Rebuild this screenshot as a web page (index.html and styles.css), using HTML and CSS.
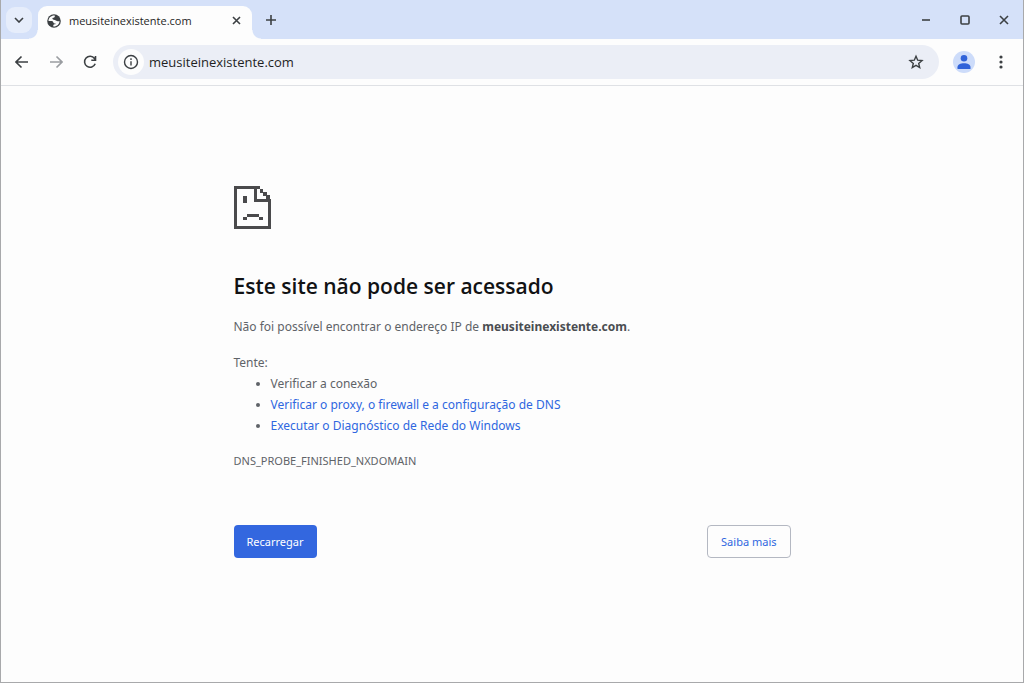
FILE: index.html
```html
<!DOCTYPE html>
<html lang="pt-BR">
<head>
  <meta charset="UTF-8">
  <meta name="viewport" content="width=device-width, initial-scale=1">
  <title>meusiteinexistente.com</title>
  <link rel="stylesheet" href="styles.css">
</head>
<body>
  <div class="window">

    <!-- Tab strip -->
    <header class="tab-strip">
      <button class="tab-search" type="button" aria-label="Pesquisar guias">
        <svg width="10" height="6" viewBox="0 0 10 6"><path d="M1 1l4 4 4-4"/></svg>
      </button>
      <div class="tab">
        <svg class="globe" width="14" height="14" viewBox="0 0 14 14">
          <circle cx="7" cy="7" r="6.8"/>
          <path d="M7.800 1.600C4.300 1.300 1.600 3.800 1.500 6.900h2.700c1.500 0 2 .7 2.200 1.500.2.900.9 1 1.800 1 .6 0 .5.600 0 .900-.6.300-1.900.1-1.900 1v1.100c3.400.300 6.200-2.200 6.200-5.500-.6.5-1.600.6-2.500.2-.9-.4-1.300-1.200-2.300-1.200-1.300 0-2.300-.4-2.300-1.300 0-1 1-1 1.800-1.200.7-.2.600-.9.600-1.800z"/>
        </svg>
        <span class="tab-title">meusiteinexistente.com</span>
        <button class="tab-close" type="button" aria-label="Fechar guia">
          <svg width="9" height="9" viewBox="0 0 9 9"><path d="M1 1l7 7M8 1l-7 7"/></svg>
        </button>
      </div>
      <button class="new-tab" type="button" aria-label="Nova guia">
        <svg width="12" height="12" viewBox="0 0 12 12"><path d="M6 1v10M1 6h10"/></svg>
      </button>
      <div class="window-controls">
        <button type="button" aria-label="Minimizar">
          <svg width="10" height="10" viewBox="0 0 10 10"><path d="M1 5h8"/></svg>
        </button>
        <button type="button" aria-label="Maximizar">
          <svg width="10" height="10" viewBox="0 0 10 10"><rect x="1" y="1" width="8" height="8" rx="1"/></svg>
        </button>
        <button type="button" aria-label="Fechar">
          <svg width="10" height="10" viewBox="0 0 10 10"><path d="M1 1l8 8M9 1L1 9"/></svg>
        </button>
      </div>
    </header>

    <!-- Toolbar -->
    <div class="toolbar">
      <nav class="nav-buttons">
        <button type="button" aria-label="Voltar">
          <svg width="14" height="14" viewBox="0 0 14 14"><path d="M13 7H1.500M6.500 1.500L1 7l5.500 5.500"/></svg>
        </button>
        <button class="inactive" type="button" aria-label="Avançar">
          <svg width="14" height="14" viewBox="0 0 14 14"><path d="M1 7h11.500M7.500 1.500L13 7l-5.500 5.500"/></svg>
        </button>
        <button type="button" aria-label="Atualizar">
          <svg width="14" height="14" viewBox="0 0 14 14"><path d="M12.200 8.800A5.500 5.500 0 1 1 11.500 3.500L12.500 4.800M12.500 1v4.200H8.300"/></svg>
        </button>
      </nav>
      <div class="address-bar">
        <button class="site-info" type="button" aria-label="Informações do site">
          <svg width="16" height="16" viewBox="0 0 16 16"><circle cx="8" cy="8" r="6.500"/><path d="M8 7.200v4.300M8 4.300v1.600"/></svg>
        </button>
        <input type="text" value="meusiteinexistente.com" aria-label="Barra de endereço">
        <button class="bookmark" type="button" aria-label="Adicionar aos favoritos">
          <svg width="16" height="16" viewBox="0 0 16 16"><path d="M8 2.200l1.700 4 4.300.4-3.300 2.800 1 4.200L8 11.400l-3.700 2.200 1-4.200L2 6.600l4.300-.4z"/></svg>
        </button>
      </div>
      <button class="profile" type="button" aria-label="Perfil">
        <svg width="14" height="16" viewBox="0 0 14 16"><circle cx="7" cy="4.300" r="3.300"/><path d="M.5 15v-1.800C.5 10.500 3.500 9.300 7 9.300s6.500 1.200 6.500 3.900V15z"/></svg>
      </button>
      <button class="menu" type="button" aria-label="Menu">
        <svg width="4" height="16" viewBox="0 0 4 16"><circle cx="2" cy="3" r="1.600"/><circle cx="2" cy="8" r="1.600"/><circle cx="2" cy="13" r="1.600"/></svg>
      </button>
    </div>

    <!-- Error page -->
    <main class="error-page">
      <svg class="sad-page" width="37" height="43" viewBox="0 0 37 43">
        <path d="M0 0h26v3h-3v10h14v30H0zM3 3v37h31V16H20V3z"/>
        <path d="M26 3h3v4h-3zM29 6h4v4h-4zM32 9h4v4h-4zM9 10h4v7H9zM13 28h12v3H13zM9 31h4v3H9zM25 31h4v3h-4z"/>
      </svg>
      <h1>Este site não pode ser acessado</h1>
      <p>Não foi possível encontrar o endereço IP de <strong>meusiteinexistente.com</strong>.</p>
      <p class="suggestions-title">Tente:</p>
      <ul>
        <li>Verificar a conexão</li>
        <li><a href="#">Verificar o proxy, o firewall e a configuração de DNS</a></li>
        <li><a href="#">Executar o Diagnóstico de Rede do Windows</a></li>
      </ul>
      <p class="error-code">DNS_PROBE_FINISHED_NXDOMAIN</p>
      <div class="actions">
        <button class="btn-reload" type="button">Recarregar</button>
        <button class="btn-more" type="button">Saiba mais</button>
      </div>
    </main>
  </div>
</body>
</html>
```
FILE: styles.css
```css
* {
  box-sizing: border-box;
}

body {
  margin: 0;
  background: #fdfdfd;
  color: #5f6368;
  font-family: "Open Sans", "Segoe UI", sans-serif;
  font-size: 13px;
}

button,
input {
  border: none;
  padding: 0;
  background: none;
  font-family: inherit;
}

button {
  display: flex;
  align-items: center;
  justify-content: center;
  cursor: pointer;
}

svg {
  fill: none;
  stroke: #3c4043;
  stroke-width: 1.6;
  flex-shrink: 0;
}

.window {
  min-height: 100vh;
  border: 1px solid #a8a9ab;
  border-top: none;
}

/* Tab strip */
.tab-strip {
  display: flex;
  align-items: flex-end;
  height: 39px;
  padding-left: 5px;
  background: #d5e1f9;
}

.tab-search {
  align-self: center;
  width: 26px;
  height: 26px;
  border-radius: 9px;
  background: #e6edfb;
}

.tab {
  position: relative;
  display: flex;
  align-items: center;
  width: 214px;
  height: 33px;
  margin-left: 6px;
  padding: 0 10px 4px 9px;
  border-radius: 9px 9px 0 0;
  background: #fdfdfd;
}

/* curved feet of the active tab */
.tab::before,
.tab::after {
  content: "";
  position: absolute;
  bottom: 0;
  width: 9px;
  height: 9px;
}

.tab::before {
  right: 100%;
  background: radial-gradient(circle at 0 0, #d5e1f9 8px, #fdfdfd 9px);
}

.tab::after {
  left: 100%;
  background: radial-gradient(circle at 100% 0, #d5e1f9 8px, #fdfdfd 9px);
}

.globe circle {
  fill: #3c4043;
  stroke: none;
}

.globe path {
  fill: #fdfdfd;
  stroke: none;
}

.tab-title {
  flex: 1;
  margin-left: 8px;
  color: #1f1f1f;
  font-size: 11px;
}

.tab-close {
  width: 12px;
  height: 16px;
}

.new-tab {
  align-self: center;
  width: 24px;
  height: 24px;
  margin-left: 7px;
}

.window-controls {
  display: flex;
  align-self: center;
  margin-left: auto;
}

.window-controls button {
  width: 39px;
  height: 30px;
}

/* Toolbar */
.toolbar {
  display: flex;
  align-items: center;
  height: 47px;
  padding: 0 11px 0 4px;
  border-bottom: 1px solid #dfe1e5;
}

.nav-buttons {
  display: flex;
}

.nav-buttons button {
  width: 34px;
  height: 32px;
}

.nav-buttons .inactive svg {
  stroke: #9a9da1;
}

.address-bar {
  display: flex;
  flex: 1;
  align-items: center;
  height: 34px;
  margin-left: 6px;
  padding: 0 12px 0 5px;
  border-radius: 17px;
  background: #ebeef6;
}

.site-info {
  width: 26px;
  height: 26px;
  border-radius: 50%;
  background: #fdfdfd;
}

.address-bar input {
  flex: 1;
  min-width: 0;
  margin-left: 5px;
  color: #1f1f1f;
  font-size: 13px;
}

.bookmark {
  width: 22px;
  height: 22px;
}

.bookmark svg,
.site-info svg {
  stroke-width: 1.4;
}

.profile {
  width: 22px;
  height: 22px;
  margin-left: 14px;
  border-radius: 50%;
  background: #cddcfa;
}

.profile svg {
  fill: #2f62d9;
  stroke: none;
}

.menu {
  width: 22px;
  height: 22px;
  margin-left: 15px;
}

.menu svg {
  fill: #3c4043;
  stroke: none;
}

/* Error page */
.error-page {
  max-width: 557px;
  margin: 0 auto;
  padding: 100px 0 40px;
  font-family: "Noto Sans", "Segoe UI", sans-serif;
  font-size: 12px;
  line-height: 21px;
}

.sad-page {
  display: block;
  fill: #4a4a4c;
  stroke: none;
}

h1 {
  margin: 41px 0 14px;
  color: #111214;
  font-family: "Open Sans", "Segoe UI", sans-serif;
  font-size: 21px;
  font-weight: 600;
  line-height: 32px;
}

p {
  margin: 0;
}

strong {
  color: #4a4d51;
  font-weight: 700;
}

.suggestions-title {
  margin-top: 15px;
}

ul {
  margin: 0;
  padding-left: 37px;
}

a {
  color: #2f67e0;
  text-decoration: none;
}

a:hover {
  text-decoration: underline;
}

.error-code {
  margin-top: 14px;
  font-size: 11px;
}

.actions {
  display: flex;
  justify-content: space-between;
  margin-top: 54px;
}

.actions button {
  height: 33px;
  padding: 0 13px;
  border-radius: 4px;
  font-size: 11px;
}

.btn-reload {
  background: #3367df;
  color: #fff;
}

.actions .btn-more {
  border: 1px solid #b4b8c2;
  color: #2f67e0;
}
```
